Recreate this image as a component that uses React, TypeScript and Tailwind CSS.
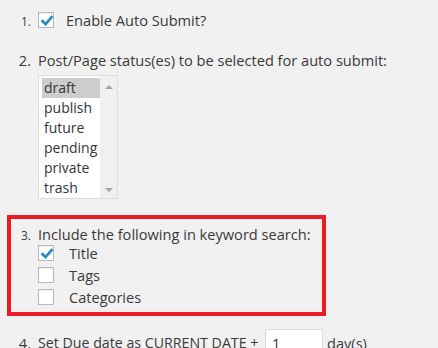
import React from "react";

const CheckMark = () => (
  <svg width="14" height="14" viewBox="0 0 14 14" className="absolute left-[1px] top-[1px]">
    <path d="M2.5 7.2 L5.6 10.2 L11.6 3.2" fill="none" stroke="#1e8cbe" strokeWidth="2.6" strokeLinecap="square" />
  </svg>
);

const Checkbox = ({ checked }: { checked?: boolean }) => (
  <span className="relative block w-[16px] h-[16px] shrink-0 border border-[#b4b9be] bg-white shadow-[inset_0_1px_2px_rgba(0,0,0,0.07)]">
    {checked && <CheckMark />}
  </span>
);

const Marker = ({ n, small }: { n: number; small?: boolean }) => (
  <span className={`w-[38px] shrink-0 text-right pr-[7px] ${small ? "text-[12px]" : "text-[14.6px]"}`}>{n}.</span>
);

const statuses = ["draft", "publish", "future", "pending", "private", "trash"];

export default function App() {
  return (
    <div className="w-full h-[348px] overflow-hidden bg-[#f1f1f1] text-[#3a3a3a] text-[14.6px] leading-[20px] font-['Open_Sans',sans-serif]">
      {/* 1 */}
      <div className="mt-[10px] flex items-baseline h-[20px]">
        <Marker n={1} small />
        <span className="self-center">
          <Checkbox checked />
        </span>
        <span className="ml-[12px]">Enable Auto Submit?</span>
      </div>

      {/* 2 */}
      <div className="mt-[20px] flex items-baseline">
        <Marker n={2} />
        <span>Post/Page status(es) to be selected for auto submit:</span>
      </div>
      <div className="ml-[38px] mt-[5px] w-[80px] h-[124px] border border-[#ddd] bg-white flex">
        <div className="flex-1 pt-[2px] pl-[3px] text-[14px]">
          {statuses.map((s, i) => (
            <div key={s} className={`h-[20px] pl-[2px] text-[#32373c] ${i === 0 ? "bg-[#cdcdcd]" : ""}`}>
              {s}
            </div>
          ))}
        </div>
        <div className="w-[17px] bg-[#f0f0f0] flex flex-col justify-between items-center pt-[9px] pb-[6px]">
          <svg width="8" height="4" viewBox="0 0 8 4"><path d="M0 4 L4 0 L8 4 Z" fill="#a3a3a3" /></svg>
          <svg width="8" height="4" viewBox="0 0 8 4"><path d="M0 0 L8 0 L4 4 Z" fill="#a3a3a3" /></svg>
        </div>
      </div>

      {/* 3 */}
      <div className="mt-[16px] ml-[7px] w-[319px] border-4 border-[#ed1c24] pt-[5px] pb-[4px]">
        <div className="flex items-baseline h-[18px] -ml-[11px]">
          <Marker n={3} small />
          <span>Include the following in keyword search:</span>
        </div>
        {[
          ["Title", true],
          ["Tags", false],
          ["Categories", false],
        ].map(([label, checked]) => (
          <div key={label as string} className="flex items-center h-[22px] pl-[27px]">
            <Checkbox checked={checked as boolean} />
            <span className="ml-[15px]">{label as string}</span>
          </div>
        ))}
      </div>

      {/* 4 */}
      <div className="mt-[13px] flex items-center">
        <Marker n={4} />
        <span className="w-[227px] shrink-0 whitespace-nowrap text-[14.2px]">Set Due date as CURRENT DATE +</span>
        <span className="w-[58px] h-[28px] shrink-0 border border-[#ddd] bg-white pl-[6px] leading-[26px] text-[#32373c]">1</span>
        <span className="ml-[4px]">day(s)</span>
      </div>
    </div>
  );
}
